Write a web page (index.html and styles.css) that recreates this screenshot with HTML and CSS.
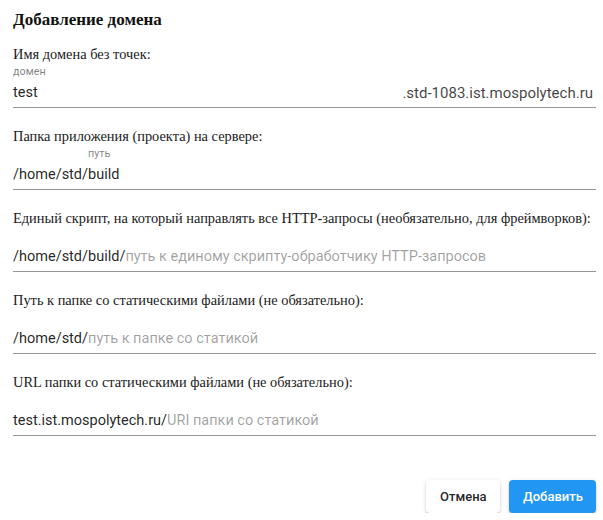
FILE: index.html
```html
<!DOCTYPE html>
<html lang="ru">
<head>
<meta charset="utf-8">
<title>Добавление домена</title>
<link rel="stylesheet" href="styles.css">
</head>
<body>
<div class="dialog">
  <h2 class="title">Добавление домена</h2>

  <div class="field">
    <div class="label">Имя домена без точек:</div>
    <div class="mini">домен</div>
    <div class="input">
      <span class="val">test</span>
      <span class="suffix">.std-1083.ist.mospolytech.ru</span>
    </div>
  </div>

  <div class="field">
    <div class="label">Папка приложения (проекта) на сервере:</div>
    <div class="mini mini-shift">путь</div>
    <div class="input">
      <span class="val">/home/std/build</span>
    </div>
  </div>

  <div class="field">
    <div class="label">Единый скрипт, на который направлять все HTTP-запросы (необязательно, для фреймворков):</div>
    <div class="mini"></div>
    <div class="input">
      <span class="val">/home/std/build/</span><span class="ph">путь к единому скрипту-обработчику HTTP-запросов</span>
    </div>
  </div>

  <div class="field">
    <div class="label">Путь к папке со статическими файлами (не обязательно):</div>
    <div class="mini"></div>
    <div class="input">
      <span class="val">/home/std/</span><span class="ph">путь к папке со статикой</span>
    </div>
  </div>

  <div class="field">
    <div class="label">URL папки со статическими файлами (не обязательно):</div>
    <div class="mini"></div>
    <div class="input">
      <span class="val">test.ist.mospolytech.ru/</span><span class="ph">URI папки со статикой</span>
    </div>
  </div>

  <div class="actions">
    <button class="btn btn-plain">Отмена</button>
    <button class="btn btn-primary">Добавить</button>
  </div>
</div>
</body>
</html>
```

FILE: styles.css
```css
html, body {
  margin: 0;
  padding: 0;
  background: #ffffff;
}

.dialog {
  padding: 10px 7px 0 13px;
  font-family: "Liberation Serif", "Times New Roman", serif;
  color: rgba(0, 0, 0, 0.87);
}

.title {
  margin: 0 0 15px 0;
  font-size: 17px;
  line-height: 20px;
  font-weight: bold;
  color: #111;
}

.field {
  margin-bottom: 19px;
}

.label {
  font-size: 14.4px;
  line-height: 18px;
  height: 18px;
  margin-bottom: 2px;
  white-space: nowrap;
  color: #1a1a1a;
}

.mini {
  font-family: Roboto, "Liberation Sans", sans-serif;
  font-size: 10.8px;
  line-height: 14px;
  height: 14px;
  margin-bottom: 4px;
  color: rgba(0, 0, 0, 0.5);
}

.mini-shift {
  padding-left: 75px;
}

.input {
  display: flex;
  justify-content: space-between;
  font-family: Roboto, "Liberation Sans", sans-serif;
  font-size: 14.5px;
  line-height: 20px;
  height: 20px;
  padding-bottom: 4px;
  border-bottom: 1px solid rgba(0, 0, 0, 0.42);
  white-space: nowrap;
}

.input .ph {
  color: rgba(0, 0, 0, 0.38);
  flex: 1;
}

.val {
  color: rgba(0, 0, 0, 0.87);
}

.suffix {
  font-size: 15px;
  color: rgba(0, 0, 0, 0.75);
  padding-right: 3px;
}

.actions {
  display: flex;
  justify-content: flex-end;
  gap: 9px;
  margin-top: 44px;
}

.btn {
  font-family: Roboto, "Liberation Sans", sans-serif;
  font-size: 13px;
  font-weight: 500;
  height: 33px;
  border: none;
  border-radius: 4px;
  padding: 0 14px;
  cursor: pointer;
  box-shadow: 0 3px 1px -2px rgba(0, 0, 0, 0.2), 0 2px 2px 0 rgba(0, 0, 0, 0.14), 0 1px 5px 0 rgba(0, 0, 0, 0.12);
}

.btn-plain {
  background: #ffffff;
  color: rgba(0, 0, 0, 0.87);
  width: 74px;
}

.btn-primary {
  background: #2196f3;
  color: #ffffff;
  width: 87px;
}
```
